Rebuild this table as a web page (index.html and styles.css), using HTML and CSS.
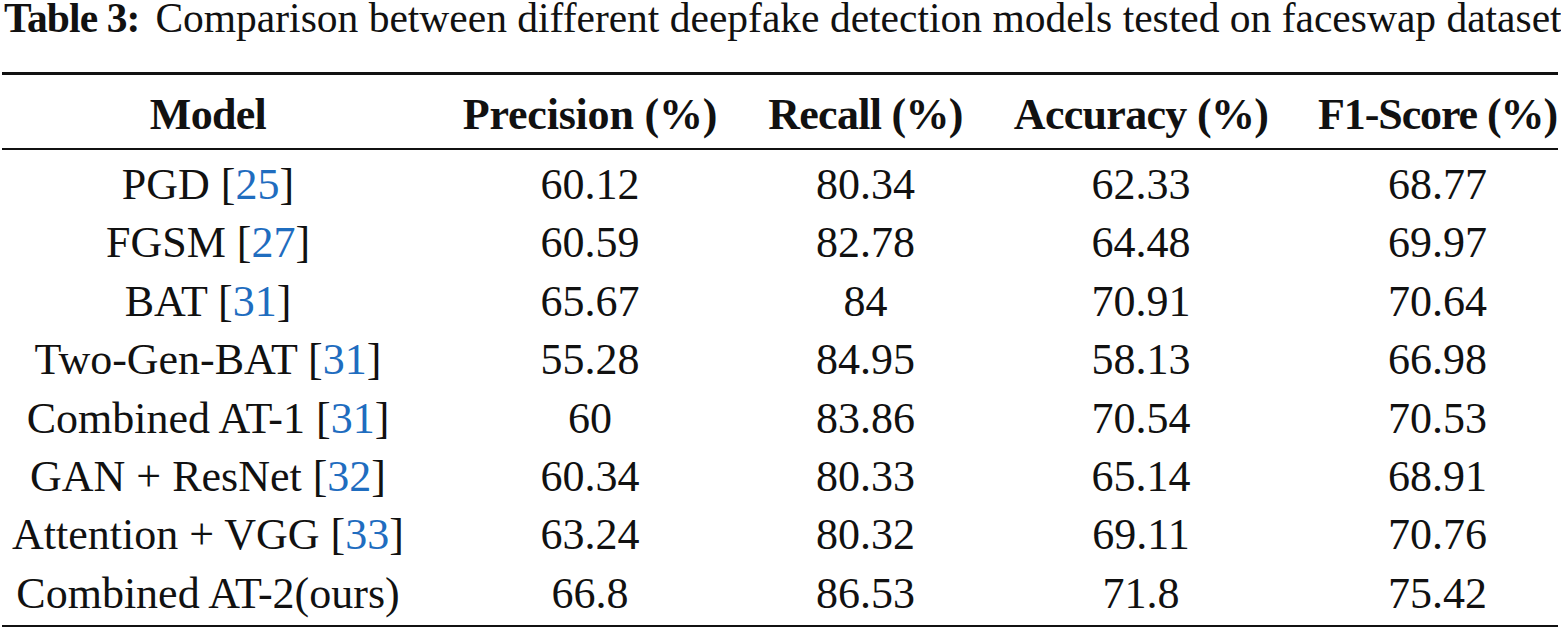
FILE: index.html
```html
<!DOCTYPE html>
<html lang="en">
<head>
<meta charset="utf-8">
<title>Table 3</title>
<link rel="stylesheet" href="styles.css">
</head>
<body>
<div class="page">
  <p class="caption"><span class="caption-label">Table 3:</span>Comparison between different deepfake detection models tested on faceswap dataset</p>
  <table class="results">
    <colgroup>
      <col class="c-model">
      <col class="c-prec">
      <col class="c-rec">
      <col class="c-acc">
      <col class="c-f1">
    </colgroup>
    <thead>
      <tr>
        <th>Model</th>
        <th class="h-wide">Precision (%)</th>
        <th>Recall (%)</th>
        <th>Accuracy (%)</th>
        <th class="h-tight">F1-Score (%)</th>
      </tr>
    </thead>
    <tbody>
      <tr><td>PGD [<a class="ref">25</a>]</td><td>60.12</td><td>80.34</td><td>62.33</td><td>68.77</td></tr>
      <tr><td>FGSM [<a class="ref">27</a>]</td><td>60.59</td><td>82.78</td><td>64.48</td><td>69.97</td></tr>
      <tr><td>BAT [<a class="ref">31</a>]</td><td>65.67</td><td>84</td><td>70.91</td><td>70.64</td></tr>
      <tr><td>Two-Gen-BAT [<a class="ref">31</a>]</td><td>55.28</td><td>84.95</td><td>58.13</td><td>66.98</td></tr>
      <tr><td>Combined AT-1 [<a class="ref">31</a>]</td><td>60</td><td>83.86</td><td>70.54</td><td>70.53</td></tr>
      <tr><td>GAN + ResNet [<a class="ref">32</a>]</td><td>60.34</td><td>80.33</td><td>65.14</td><td>68.91</td></tr>
      <tr><td>Attention + VGG [<a class="ref">33</a>]</td><td>63.24</td><td>80.32</td><td>69.11</td><td>70.76</td></tr>
      <tr><td>Combined AT-2(ours)</td><td>66.8</td><td>86.53</td><td>71.8</td><td>75.42</td></tr>
    </tbody>
  </table>
</div>
</body>
</html>
```
FILE: styles.css
```css
html, body {
  margin: 0;
  padding: 0;
  background: #ffffff;
}

.page {
  width: 1561px;
  height: 631px;
  overflow: hidden;
  font-family: "Liberation Serif", "Times New Roman", serif;
  color: #111111;
}

.caption {
  margin: 0 0 36px 0;
  padding-left: 4px;
  font-size: 41.5px;
  line-height: 36px;
  white-space: nowrap;
}

.caption-label {
  font-weight: bold;
  letter-spacing: -0.9px;
  margin-right: 16px;
}

.results {
  margin-left: 2px;
  width: 1556px;
  border-collapse: collapse;
  table-layout: fixed;
  font-size: 44px;
  border-top: 3px solid #111111;
  border-bottom: 2.5px solid #111111;
}

.c-model { width: 412px; }
.c-prec { width: 352px; }
.c-rec { width: 199px; }
.c-acc { width: 352px; }
.c-f1 { width: 241px; }

.results th {
  font-size: 44px;
  font-weight: bold;
  letter-spacing: -0.7px;
  text-align: center;
  padding: 6px 0 0 0;
  height: 67px;
  line-height: 67px;
  white-space: nowrap;
  border-bottom: 2px solid #111111;
}

.results th.h-wide {
  letter-spacing: -0.2px;
}

.results th.h-tight {
  letter-spacing: -1.1px;
}

.results td {
  text-align: center;
  padding: 0;
  line-height: 58.4px;
  height: 58.4px;
  white-space: nowrap;
}

.results tbody tr:first-child td {
  padding-top: 6px;
}

.results tbody tr:last-child td {
  padding-bottom: 2px;
}

.ref {
  color: #1f6dbf;
  text-decoration: none;
}
```
